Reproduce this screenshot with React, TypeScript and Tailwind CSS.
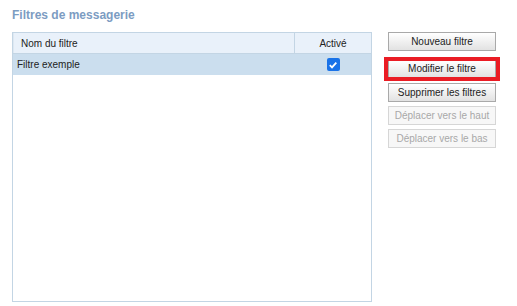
export default function App() {
  return (
    <div className="w-[517px] h-[306px] bg-white font-['Liberation_Sans',Arial,sans-serif] text-[10px] text-[#222]">
      <div className="pl-3 pt-[8px] h-[32px]">
        <h3 className="text-[12px] font-bold text-[#7c9cc2] leading-[15px]">Filtres de messagerie</h3>
      </div>
      <div className="flex">
        <div className="ml-3 w-[360px] h-[270px] border border-[#c3d5e4] bg-white">
          <div className="flex h-[21px] bg-[#e9f1fa] border-b border-[#c3d5e4]">
            <div className="flex-1 flex items-center pl-[7px] border-r border-[#c3d5e4] border-l border-l-[#dde8f2]">
              Nom du filtre
            </div>
            <div className="w-[76px] flex items-center justify-center">Activé</div>
          </div>
          <div className="flex h-[21px] bg-[#cbdeee]">
            <div className="flex-1 flex items-center pl-[4px]">Filtre exemple</div>
            <div className="w-[76px] flex items-center justify-center">
              <span className="w-[13px] h-[13px] rounded-[2px] bg-[#1a73e8] flex items-center justify-center">
                <svg width="10" height="10" viewBox="0 0 10 10">
                  <path d="M1.8 5.2 L4 7.4 L8.3 2.6" fill="none" stroke="white" strokeWidth="1.8" />
                </svg>
              </span>
            </div>
          </div>
        </div>
        <div className="ml-[16px] w-[108px] flex flex-col">
          <button className="h-[19px] border border-[#a9a9a9] bg-gradient-to-b from-white to-[#e2e2e2] text-[#222]">
            Nouveau filtre
          </button>
          <div className="mt-[6px] -mx-[4px] border-4 border-[#ea1c24]">
            <button className="w-full h-[16px] border-x border-[#a9a9a9] bg-gradient-to-b from-white to-[#e2e2e2] text-[#222] leading-[14px]">
              Modifier le filtre
            </button>
          </div>
          <button className="mt-[2px] h-[19px] border border-[#a9a9a9] bg-gradient-to-b from-white to-[#e2e2e2] text-[#222]">
            Supprimer les filtres
          </button>
          <button disabled className="mt-[4px] h-[19px] border border-[#d6d6d6] bg-[#f7f7f7] text-[#a8a8a8]">
            Déplacer vers le haut
          </button>
          <button disabled className="mt-[4px] h-[19px] border border-[#d6d6d6] bg-[#f7f7f7] text-[#a8a8a8]">
            Déplacer vers le bas
          </button>
        </div>
      </div>
    </div>
  )
}
